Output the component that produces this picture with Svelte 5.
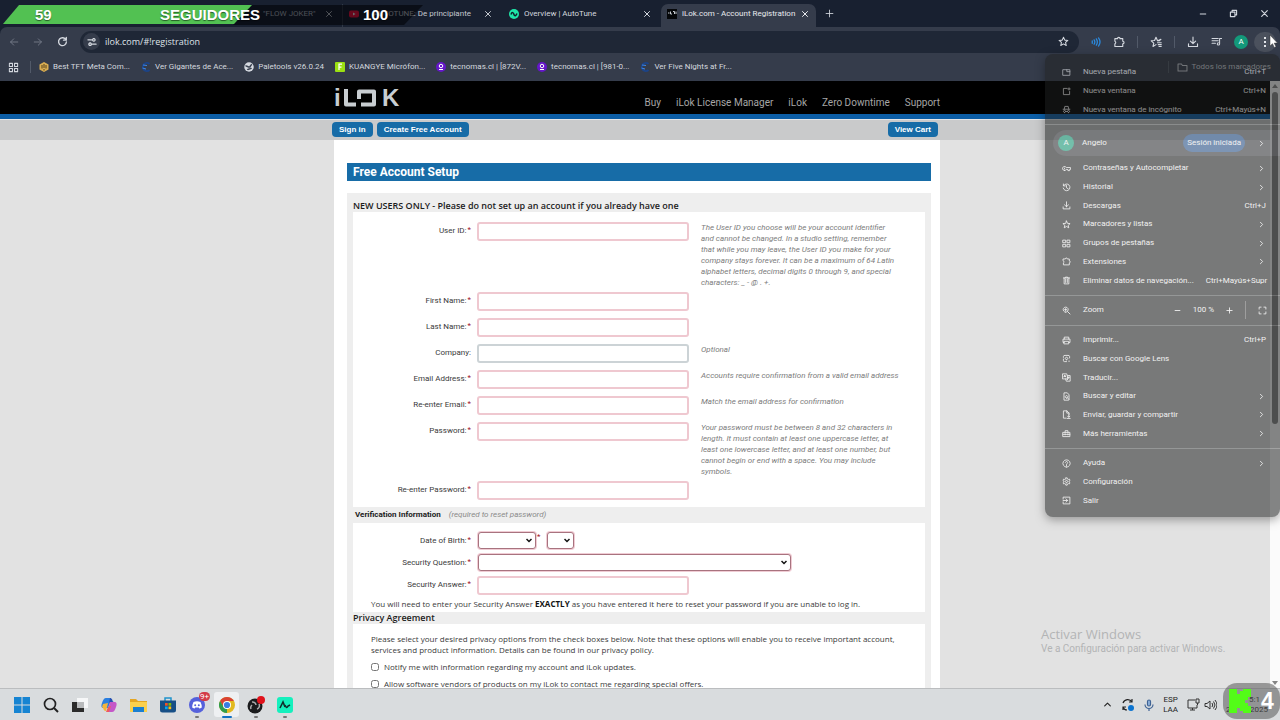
<script>
  const bookmarks = [
    { icon: 'hex', label: 'Best TFT Meta Com...' },
    { icon: 'arc', label: 'Ver Gigantes de Ace...' },
    { icon: 'globe', label: 'Paletools v26.0.24' },
    { icon: 'lime', label: 'KUANGYE Micrófon...' },
    { icon: 'purple', label: 'tecnomas.cl | [872V...' },
    { icon: 'purple', label: 'tecnomas.cl | [981-0...' },
    { icon: 'arc', label: 'Ver Five Nights at Fr...' }
  ];

  const nav = ['Buy', 'iLok License Manager', 'iLok', 'Zero Downtime', 'Support'];

  const fields = [
    {
      id: 'user', label: 'User ID:', req: true,
      help: 'The User ID you choose will be your account identifier and cannot be changed. In a studio setting, remember that while you may leave, the User ID you make for your company stays forever. It can be a maximum of 64 Latin alphabet letters, decimal digits 0 through 9, and special characters: _ - @ . +.'
    },
    { id: 'first', label: 'First Name:', req: true },
    { id: 'last', label: 'Last Name:', req: true },
    { id: 'company', label: 'Company:', req: false, help: 'Optional' },
    { id: 'email', label: 'Email Address:', req: true, help: 'Accounts require confirmation from a valid email address' },
    { id: 'email2', label: 'Re-enter Email:', req: true, help: 'Match the email address for confirmation' },
    {
      id: 'pass', label: 'Password:', req: true, type: 'password',
      help: 'Your password must be between 8 and 32 characters in length. It must contain at least one uppercase letter, at least one lowercase letter, and at least one number, but cannot begin or end with a space. You may include symbols.'
    },
    { id: 'pass2', label: 'Re-enter Password:', req: true, type: 'password' }
  ];

  const newItems = [
    { icon: 'tab', label: 'Nueva pestaña', key: 'Ctrl+T' },
    { icon: 'window', label: 'Nueva ventana', key: 'Ctrl+N' },
    { icon: 'incognito', label: 'Nueva ventana de incógnito', key: 'Ctrl+Mayús+N' }
  ];
  const dataItems = [
    { icon: 'key', label: 'Contraseñas y Autocompletar', more: true },
    { icon: 'history', label: 'Historial', more: true },
    { icon: 'download', label: 'Descargas', key: 'Ctrl+J' },
    { icon: 'star', label: 'Marcadores y listas', more: true },
    { icon: 'grid', label: 'Grupos de pestañas', more: true },
    { icon: 'puzzle', label: 'Extensiones', more: true },
    { icon: 'trash', label: 'Eliminar datos de navegación...', key: 'Ctrl+Mayús+Supr' }
  ];
  const toolItems = [
    { icon: 'print', label: 'Imprimir...', key: 'Ctrl+P' },
    { icon: 'lens', label: 'Buscar con Google Lens' },
    { icon: 'translate', label: 'Traducir...' },
    { icon: 'find', label: 'Buscar y editar', more: true },
    { icon: 'share', label: 'Enviar, guardar y compartir', more: true },
    { icon: 'toolbox', label: 'Más herramientas', more: true }
  ];
  const endItems = [
    { icon: 'help', label: 'Ayuda', more: true },
    { icon: 'gear', label: 'Configuración' },
    { icon: 'exit', label: 'Salir' }
  ];

  // Line icons on a 16 x 16 grid
  const paths = {
    tab: 'M2 3h12v10H2zM8.500 3v3.500H14',
    window: 'M9 2.500H2.500v11h11V8M12.500 1.500v4M10.500 3.500h4',
    incognito: 'M2 7.500h12M4 7.500l1-5h6l1 5M4.500 13.500a2 2 0 1 1 .1 0M11.500 13.500a2 2 0 1 1 .1 0M6.500 11.500h3',
    key: 'M4.500 11.500a3.500 3.500 0 1 1 3-5.200h7.500v3.500h-1.500v2h-3v-2h-3a3.500 3.500 0 0 1-3 1.700zM4.500 7.500v1',
    history: 'M3 4.500A6 6 0 1 1 2.200 9M2.500 1.800v3.400h3.400M8 4.500V8.500l3 1.800',
    download: 'M8 1.500v8.500M4.500 6.800L8 10.200l3.500-3.400M2 10.500V14h12v-3.500',
    star: 'M8 1.800l1.900 4.200 4.500.4-3.400 3 1 4.500L8 11.500l-4 2.400 1-4.500-3.400-3 4.500-.4z',
    starlist: 'M13 6.300L9.900 6 8 1.800 6.100 6l-4.500.4 3.400 3-1 4.500L8 11.500M10 9h5M11 11.500h4M12 14h3M10.500 6.500l4-2',
    grid: 'M2 2h4.500v4.500H2zM9.500 2H14v4.500H9.500zM2 9.500h4.500V14H2zM9.500 9.500H14V14H9.500z',
    puzzle: 'M2.500 3.500H6a1.700 1.700 0 0 1 3.400 0H13V7a1.700 1.700 0 0 1 0 3.400V14H2.500v-3.500a1.900 1.900 0 0 0 0-3.500z',
    trash: 'M2.500 3.500h11M6 3.500V2h4v1.500M3.800 3.500V14h8.400V3.500M6.500 6v5.500M9.500 6v5.500',
    print: 'M4 5.500V2h8v3.500M4 11.500H1.800v-6h12.400v6H12M4 9.500h8V14H4z',
    lens: 'M5.500 2.500h5M2.500 6V4.500a2 2 0 0 1 2-2M13.500 7V4.500a2 2 0 0 0-2-2M2.500 9v2.500a2 2 0 0 0 2 2H8M8 10.300a2.300 2.300 0 1 1 .1 0M12.500 13.500v-1.200',
    translate: 'M1.500 1.500h7l2 9h-9zM10 4.500h4.500v10h-7l-1-4M3.500 7l1.500-3.500L6.500 7M4 6h2M9.500 7.500h4M11.500 7.500c0 2-1 3.500-2 4.500',
    find: 'M12.500 13V5l-3-3.500h-6v13h8M8 11a2.300 2.300 0 1 1 .1 0M9.600 10.300l2.900 3.200',
    share: 'M7.500 14.500h-5v-13h6l4 4v3M8.500 1.500v4h4M12 8.500v4M10 11l2 2 2-2M9.500 15h5',
    toolbox: 'M2 6h12v7.500H2zM5.500 6V3h5v3M2 9.500h12M5.500 8.500v2M10.500 8.500v2',
    help: 'M8 14.500a6.500 6.500 0 1 1 .1 0M6 6.200a2 2 0 1 1 3 1.800c-.8.500-1 .9-1 1.700M8 11v1.200',
    gear: 'M6.800 1.500h2.400l.4 2 1.500.9 2-.7 1.100 2-1.500 1.500v1.700l1.500 1.400-1.100 2-2-.6-1.500.8-.4 2H6.800l-.4-2-1.500-.8-2 .6-1.100-2 1.500-1.400V7.200L1.800 5.700l1.100-2 2 .7 1.500-.9zM8 10.300a2.200 2.200 0 1 1 .1 0',
    exit: 'M2 5.500V2h12v12H2v-3.500M2 8h7.500M7 5l3 3-3 3',
    zoom: 'M6.500 11a4.500 4.500 0 1 1 .1 0M9.800 9.800l4.500 4.500M4.500 6.500h4M6.500 4.500v4',
    full: 'M2 5.500V2h3.500M10.500 2H14v3.500M14 10.500V14h-3.500M5.500 14H2v-3.500',
    chevron: 'M6 4l4 4-4 4',
    close: 'M3 3l10 10M13 3L3 13',
    plus: 'M8 2v12M2 8h12',
    minus: 'M2.500 8h11',
    back: 'M14 8H2.500M7.500 3L2.500 8l5 5',
    forward: 'M2 8h11.500M8.500 3l5 5-5 5',
    reload: 'M13 5.500A5.700 5.700 0 1 0 13.700 8.500M13.500 2v4h-4',
    tune: 'M1.500 4.500h6M11 2.500a2 2 0 1 1-.1 0M14.500 11.500h-6M5 9.500a2 2 0 1 1-.1 0',
    restore: 'M2.500 5.500h8v8h-8zM5.500 5V2.500h8v8H11',
    waves: 'M2 6v4M5 4.500c1.300 2 1.300 5 0 7M8.500 3c2 3 2 7 0 10M12 1.500c3 4 3 9 0 13',
    list: 'M1.500 3.500h9M1.500 7h9M1.500 10.500h5M12.500 11.500V3.500h3M12.500 11.500a1.700 1.700 0 1 1-1.700-1.700',
    folder: 'M1.500 13V3h5l1.500 2h6.500v8z',
    up: 'M3 10.500L8 5.500l5 5'
  };
</script>

{#snippet ic(name, size = 10, weight = 1.5)}
  <svg class="ic" width={size} height={size} viewBox="0 0 16 16" fill="none" stroke="currentColor" stroke-width={weight} stroke-linecap="round" stroke-linejoin="round" aria-hidden="true"><path d={paths[name]} /></svg>
{/snippet}

{#snippet fav(name)}
  <svg class="ic" width="10" height="10" viewBox="0 0 20 20" aria-hidden="true">
    {#if name === 'hex'}
      <path d="M10 0l9 5v10l-9 5-9-5V5z" fill="#d9ad52" /><path d="M10 4v8M10 14v3M6 6v7M14 6v7" stroke="#54401a" stroke-width="2" />
    {:else if name === 'arc'}
      <path d="M17 4A8 8 0 1 0 17 16" fill="none" stroke="#1c4488" stroke-width="4" /><path d="M4 6l8 1M3 12l7 2" stroke="#3c86e8" stroke-width="2" />
    {:else if name === 'globe'}
      <circle cx="10" cy="10" r="9.500" fill="#d5d9e0" /><path d="M3 8c4-1 5 3 8 2s1-4 5-5M7 16c1-3 5-1 8-4" fill="none" stroke="#394150" stroke-width="3" />
    {:else if name === 'lime'}
      <rect width="20" height="20" rx="2" fill="#9be012" /><path d="M8 16V4h6M8 10h5" fill="none" stroke="#fff" stroke-width="2.500" />
    {:else if name === 'purple'}
      <circle cx="10" cy="10" r="10" fill="#6516c9" /><circle cx="10" cy="8" r="3.500" fill="none" stroke="#fff" stroke-width="2" /><path d="M6 15h8" stroke="#fff" stroke-width="2" />
    {:else if name === 'tune'}
      <circle cx="10" cy="10" r="10" fill="#1ee6a8" /><path d="M4 11c2-6 5-4 6 0s4 3 6-2" fill="none" stroke="#10202a" stroke-width="3" />
    {:else if name === 'yt'}
      <rect y="3" width="20" height="14" rx="4" fill="#ff1040" /><path d="M8 7l5 3-5 3z" fill="#fff" />
    {:else}
      <rect width="20" height="20" fill="#05070a" /><path d="M2 8h3M7 5v5h3M12 5h3v5M18 5v5" stroke="#c9ced4" stroke-width="2" fill="none" />
    {/if}
  </svg>
{/snippet}

{#snippet rows(items)}
  <div class="group" style="flex-grow: {items.length}">
    {#each items as it}
      <button class="row" type="button">
        {@render ic(it.icon, 9)}
        <span class="name">{it.label}</span>
        {#if it.key}<span class="key">{it.key}</span>{/if}
        {#if it.more}{@render ic('chevron', 9)}{/if}
      </button>
    {/each}
  </div>
{/snippet}

{#snippet label(f)}
  <label for={f.id}>{f.label}{#if f.req}<sup>*</sup>{/if}</label>
{/snippet}

<div class="screen">
  <header class="tabs">
    <div class="tab first"><span class="title">"FLOW JOKER"</span><button aria-label="Cerrar">{@render ic('close', 8, 2)}</button></div>
    <div class="tab second">{@render fav('yt')}<span class="title">AUTOTUNE: De principiante</span><button aria-label="Cerrar">{@render ic('close', 8, 2)}</button></div>
    <div class="tab third">{@render fav('tune')}<span class="title">Overview | AutoTune</span><button aria-label="Cerrar">{@render ic('close', 8, 2)}</button></div>
    <div class="tab active">{@render fav('ilok')}<span class="title">iLok.com - Account Registration</span><button aria-label="Cerrar">{@render ic('close', 8, 2)}</button></div>
    <button class="plus" aria-label="Nueva pestaña">{@render ic('plus', 9)}</button>
    <div class="controls">
      <button aria-label="Minimizar">{@render ic('minus', 8, 2)}</button>
      <button aria-label="Restaurar">{@render ic('restore', 9, 2)}</button>
      <button aria-label="Cerrar">{@render ic('close', 9, 2)}</button>
    </div>
  </header>

  <div class="toolbar">
    <button class="off" aria-label="Atrás">{@render ic('back')}</button>
    <button class="off" aria-label="Adelante">{@render ic('forward')}</button>
    <button aria-label="Recargar">{@render ic('reload', 11, 2)}</button>
    <div class="omni">
      <span class="site">{@render ic('tune', 10, 2)}</span>
      <input aria-label="Dirección" value="ilok.com/#!registration" />
      <button aria-label="Favorito">{@render ic('star', 11)}</button>
    </div>
    <div class="actions">
      <button class="blue" aria-label="Audio">{@render ic('waves', 10, 2)}</button>
      <button aria-label="Extensiones">{@render ic('puzzle', 12)}</button>
      <i></i>
      <button aria-label="Marcadores">{@render ic('starlist', 12)}</button>
      <i></i>
      <button aria-label="Descargas">{@render ic('download', 12)}</button>
      <button aria-label="Multimedia">{@render ic('list', 11)}</button>
      <button class="avatar">A</button>
      <button class="dots" aria-label="Menú"><b></b><b></b><b></b></button>
    </div>
  </div>

  <nav class="bookmarks">
    {@render ic('grid', 11)}
    <i></i>
    {#each bookmarks as b}
      <a href="#top">{@render fav(b.icon)}<span>{b.label}</span></a>
    {/each}
    <i class="end"></i>
    <a class="all" href="#top">{@render ic('folder', 11)}<span>Todos los marcadores</span></a>
  </nav>

  <div class="view">
    <div class="page">
      <div class="black">
        <div class="wrap">
          <svg class="logo" width="68" height="20" viewBox="0 0 68 20" role="img" aria-label="iLok">
            <text x="0" y="18">i</text>
            <path d="M12 1v15.500h10M25 11V3.500h15v13H27" fill="none" stroke="#c8cdd1" stroke-width="4" stroke-linejoin="round" />
            <text x="48" y="18">K</text>
          </svg>
          <nav>{#each nav as n}<a href="#top">{n}</a>{/each}</nav>
        </div>
      </div>
      <div class="sub">
        <div class="wrap">
          <button>Sign in</button>
          <button>Create Free Account</button>
          <button class="cart">View Cart</button>
        </div>
      </div>
      <main>
        <h1>Free Account Setup</h1>
        <form>
          <h2>NEW USERS ONLY - Please do not set up an account if you already have one</h2>
          <section class="box account">
            {#each fields as f}
              <div class="field">
                {@render label(f)}
                <input id={f.id} type={f.type ?? 'text'} class:req={f.req} />
                {#if f.help}<p>{f.help}</p>{/if}
              </div>
            {/each}
          </section>
          <h3>Verification Information <em>(required to reset password)</em></h3>
          <section class="box verify">
            <div class="field">
              {@render label({ id: 'month', label: 'Date of Birth:', req: true })}
              <div class="dates">
                <select id="month" class="month"><option></option></select><sup>*</sup>
                <select class="day" aria-label="Day"><option></option></select>
              </div>
            </div>
            <div class="field">
              {@render label({ id: 'question', label: 'Security Question:', req: true })}
              <select id="question" class="question"><option></option></select>
            </div>
            <div class="field">
              {@render label({ id: 'answer', label: 'Security Answer:', req: true })}
              <input id="answer" type="text" class="req" />
            </div>
            <p class="note">You will need to enter your Security Answer <b>EXACTLY</b> as you have entered it here to reset your password if you are unable to log in.</p>
          </section>
          <h2 class="privacy">Privacy Agreement</h2>
          <section class="box terms">
            <p>Please select your desired privacy options from the check boxes below. Note that these options will enable you to receive important account, services and product information. Details can be found in our privacy policy.</p>
            <label><input type="checkbox" />Notify me with information regarding my account and iLok updates.</label>
            <label><input type="checkbox" />Allow software vendors of products on my iLok to contact me regarding special offers.</label>
          </section>
        </form>
      </main>
    </div>
    <div class="scroll"><span class="arrow top"></span><span class="thumb"></span><span class="arrow"></span></div>
  </div>

  <footer class="taskbar">
    <div class="apps">
      <button aria-label="Inicio"><svg width="16" height="16" viewBox="0 0 16 16"><path d="M0 0h7.500v7.500H0zM8.500 0H16v7.500H8.500zM0 8.500h7.500V16H0zM8.500 8.500H16V16H8.500z" fill="#1684d2" /></svg></button>
      <button aria-label="Buscar"><svg width="16" height="16" viewBox="0 0 16 16" fill="none" stroke="#222" stroke-width="1.700"><circle cx="7" cy="7" r="5.500" /><path d="M11 11l4 4" stroke-width="2" /></svg></button>
      <button aria-label="Vista de tareas"><svg width="16" height="16" viewBox="0 0 16 16"><path d="M5 1h11v10H5z" fill="#f6f7f8" /><path d="M0 5h5v6h7v4H0z" fill="#2b2b2b" /><path d="M5 5h7v6H5z" fill="#b8babc" /></svg></button>
      <button aria-label="Copilot"><svg width="16" height="16" viewBox="0 0 16 16"><path d="M5 1h5L7 11H3c-3 0-3-2-2-5s2-5 4-5z" fill="#2a7fe0" /><path d="M9 1c3 0 2 4 4 4h-4L7 11z" fill="#264fb0" /><path d="M2 7l5-1-2 8c-3 0-2-3-4-4z" fill="#f3b43a" /><path d="M9 5h4c3 0 3 2 2 5s-2 5-4 5H6z" fill="#c557c8" /><path d="M7 10l3-1-2 6H5z" fill="#ef5c5c" /></svg></button>
      <button aria-label="Explorador"><svg width="17" height="16" viewBox="0 0 17 16"><path d="M0 2h6l2 2h9v11H0z" fill="#e5a623" /><path d="M0 5h17v10H0z" fill="#fbd04d" /><path d="M3 10h11v5H3z" fill="#1b7fd0" /></svg></button>
      <button aria-label="Tienda"><svg width="16" height="16" viewBox="0 0 16 16"><path d="M5 4V1h6v3" fill="none" stroke="#1f93cc" stroke-width="1.500" /><path d="M0 3.500h16V13a2.500 2.500 0 0 1-2.500 2.500h-11A2.500 2.500 0 0 1 0 13z" fill="#174f86" /><path d="M5 6h2.700v2.700H5z" fill="#f35325" /><path d="M8.500 6h2.700v2.700H8.500z" fill="#81bc06" /><path d="M5 9.500h2.700v2.700H5z" fill="#05a6f0" /><path d="M8.500 9.500h2.700v2.700H8.500z" fill="#ffba08" /></svg></button>
      <button class="run" aria-label="Discord"><svg width="16" height="16" viewBox="0 0 16 16"><circle cx="8" cy="8" r="8" fill="#5561dc" /><path d="M4.500 5q3.500-1.500 7 0 1.500 3 1.300 5.500-1.500 1-2.500 1l-.6-1H6.300l-.6 1q-1 0-2.500-1Q3 8 4.500 5z" fill="#fff" /><circle cx="6.200" cy="8.300" r="1" fill="#5561dc" /><circle cx="9.800" cy="8.300" r="1" fill="#5561dc" /></svg><span class="count">9+</span></button>
      <button class="run now" aria-label="Chrome"><svg width="16" height="16" viewBox="0 0 16 16"><circle cx="8" cy="8" r="8" fill="#e2b91f" /><path d="M1.070 4A8 8 0 0 1 14.900 4H8L4.500 10z" fill="#d94234" /><path d="M1.070 4L4.600 10 8 12l0 4A8 8 0 0 1 1.070 4z" fill="#2f9c4e" /><circle cx="8" cy="8" r="4" fill="#fff" /><circle cx="8" cy="8" r="3.100" fill="#3a7de0" /></svg></button>
      <button class="run" aria-label="OBS"><svg width="18" height="18" viewBox="0 0 18 18"><circle cx="8" cy="10" r="7.500" fill="#1b1b1d" /><path d="M5 6a3.500 3.500 0 0 1 4 3M12 8a3.500 3.500 0 0 1-2 5M4 13a3.500 3.500 0 0 1 1-4" stroke="#aaa" stroke-width="1.500" fill="none" /><circle cx="14" cy="4" r="4" fill="#e0121b" /></svg></button>
      <button class="run" aria-label="AutoTune"><svg width="16" height="16" viewBox="0 0 16 16"><rect width="16" height="16" rx="3" fill="#14f0bd" /><path d="M3 11l3-6 2 5M8 8c1 3 2 3 3 1l2-1" stroke="#10302c" stroke-width="1.600" fill="none" /></svg></button>
    </div>
    <div class="tray">
      {@render ic('up', 9, 2)}
      <svg width="14" height="14" viewBox="0 0 14 14" fill="none" stroke="#222" stroke-width="1.200"><path d="M2 5a5 5 0 0 1 9-1M11 1v3H8M2 12V9h3M2 9q1 3 4 3" /><circle cx="10" cy="10" r="3" fill="#0b74d0" stroke="none" /></svg>
      <svg width="10" height="12" viewBox="0 0 10 12" fill="none" stroke="#3f6394" stroke-width="1.200"><rect x="3.500" y="1" width="3" height="6" rx="1.500" fill="#8fb2dc" /><path d="M1 5.500a4 4 0 0 0 8 0M5 9.500V12" /></svg>
      <span class="lang">ESP<br />LAA</span>
      <span class="devices">
        <svg width="13" height="13" viewBox="0 0 13 13" fill="none" stroke="#333"><path d="M8 2H1v8h9V7M3 12h5M5.500 10v2M9 1h3v4H9zM10.500 5v2" /></svg>
        <svg width="13" height="12" viewBox="0 0 13 12" fill="none" stroke="#333"><path d="M1 4.500h2L6 2v8L3 7.500H1zM8 4q1.500 2 0 4M9.500 2.500q3 3.500 0 7M11 1q4 5 0 10" /></svg>
      </span>
      <span class="clock"><span>5:1</span><span class="date"><span>2</span><span>2025</span></span></span>
    </div>
  </footer>

  <div class="activate"><strong>Activar Windows</strong><span>Ve a Configuración para activar Windows.</span></div>

  <div class="menu">
    {@render rows(newItems)}
    <hr />
    <button class="profile" type="button">
      <span class="face">A</span><span class="name">Angelo</span><span class="chip">Sesión iniciada</span>{@render ic('chevron', 9)}
    </button>
    {@render rows(dataItems)}
    <hr />
    <div class="zoomrow">
      {@render ic('zoom', 9)}<span class="name">Zoom</span>
      <button aria-label="Alejar">{@render ic('minus', 7, 2)}</button><span>100 %</span><button aria-label="Acercar">{@render ic('plus', 7, 2)}</button>
      <i></i>{@render ic('full', 9)}
    </div>
    <hr />
    {@render rows(toolItems)}
    <hr />
    {@render rows(endItems)}
  </div>

  <div class="goal">
    <svg width="424" height="20" viewBox="0 0 424 20" aria-hidden="true"><path d="M250 0h173l-19 20H233z" fill="#020406" fill-opacity="0.600" /><path d="M19 0h233l-18 19H3z" fill="#52c152" /></svg>
    <span class="g1">59</span><span class="g2">SEGUIDORES</span><span class="g3">100</span>
  </div>

  <div class="kick">
    <svg width="22" height="24" viewBox="0 0 22 24" aria-hidden="true"><path d="M0 0h8v5h3V2h3V0h8v8h-3v3h-3v3h3v3h3v7h-8v-2h-3v-3H8v5H0z" fill="#53fc18" /></svg>
    <span>4</span>
  </div>

  <svg class="cursor" width="9" height="13" viewBox="0 0 9 13" aria-hidden="true"><path d="M1 0v11l2.500-2.300L5.300 12.500l1.700-.8-1.800-3.600H8.500z" fill="#fff" stroke="#333" stroke-width="0.500" /></svg>
</div>

<style>
  :global(body) { margin: 0; }
  * { box-sizing: border-box; }
  button { font: inherit; color: inherit; background: none; border: 0; padding: 0; }
  button, .ic, svg { display: block; flex: none; }
  a { color: inherit; text-decoration: none; }
  h1, h2, h3, p { margin: 0; }

  .screen {
    position: relative;
    display: flex;
    flex-direction: column;
    height: 100vh;
    overflow: hidden;
    font: 8px/12px Roboto, "Noto Sans", sans-serif;
    color: #d4d8df;
    background: #182030;
  }

  .tabs { display: flex; align-items: stretch; height: 27px; padding-top: 4px; flex: none; }
  .tab { display: flex; align-items: center; gap: 5px; padding: 0 7px 4px 6px; }
  .tab .title { flex: 1; overflow: hidden; white-space: nowrap; }
  .tab.first { width: 342px; padding-left: 263px; padding-right: 9px; }
  .tab.first, .tab.second { color: #c4c8cf; }
  .tab.first .title { color: #b8bec8; }
  .tab.second { width: 159px; padding-right: 9px; border-left: 1px solid #303948; }
  .tab.second .title { text-align: right; padding-right: 8px; }
  .tab.third { width: 160px; padding-left: 8px; padding-right: 10px; }
  .tab.active { width: 155px; background: #353c4b; border-radius: 7px 7px 0 0; color: #e8eaee; }
  .plus { padding: 0 9px 4px; }
  .controls { display: flex; align-items: center; gap: 22px; margin-left: auto; padding: 0 11px 4px 0; }

  .toolbar { display: flex; align-items: center; gap: 14px; height: 28px; padding: 1px 4px 0 9px; flex: none; background: #353c4b; border-radius: 7px 7px 0 0; }
  .off { color: #737a87; }
  .omni { display: flex; flex: 1; align-items: center; gap: 5px; height: 22px; padding: 0 10px 0 3px; border-radius: 11px; background: #1f2736; margin-left: -2px; }
  .site { display: grid; place-items: center; width: 17px; height: 17px; border-radius: 50%; background: #353c4b; }
  .omni input { flex: 1; min-width: 0; border: 0; padding: 0; background: none; font: 9px/14px "Open Sans", sans-serif; color: #dfe3e9; outline: 0; }
  .actions { display: flex; align-items: center; gap: 12px; margin-left: -2px; }
  .actions i, .bookmarks i { width: 1px; height: 12px; background: #525a69; }
  .blue { color: #2b8be0; }
  .avatar { width: 14px; height: 14px; border-radius: 50%; background: #13997a; color: #fff; }
  .dots { display: grid; place-content: center; gap: 2px; width: 22px; height: 20px; margin-left: -6px; border-radius: 10px; background: #4b515d; }
  .dots b { width: 2px; height: 2px; background: #e4e6ea; }

  .bookmarks { display: flex; align-items: center; gap: 11px; height: 26px; padding: 0 9px 2px 8px; flex: none; background: #353c4b; }
  .bookmarks a { display: flex; align-items: center; gap: 4px; white-space: nowrap; }
  .bookmarks i { margin-right: -3px; }
  .bookmarks .end { margin-left: auto; }

  .view { position: relative; display: flex; flex: 1; min-height: 0; background: #e2e2e2; color: #3a3a3a; }
  .page { flex: 1; overflow: hidden; }
  .wrap, main { width: 606px; margin: 0 auto; position: relative; left: 2px; }
  .wrap { display: flex; }
  .black { height: 38px; background: #000; border-bottom: 5px solid #0c5ea6; }
  .black .wrap { justify-content: space-between; padding-top: 7px; }
  .black nav { display: flex; gap: 15px; font: 10px/30px Roboto, sans-serif; color: #a6a6a6; }
  .logo { overflow: visible; }
  .logo text { font: bold 24px "Liberation Sans", sans-serif; fill: #c8cdd1; }
  .sub { height: 21px; background: #c9cacb; border-top: 1px solid #e6e8ea; }
  .sub .wrap { left: 0; gap: 4px; padding-top: 2px; }
  .sub button { height: 15px; padding: 0 7px; border-radius: 4px; background: #176ca7; color: #fff; font: bold 8px/15px "Liberation Sans", sans-serif; }
  .sub .cart { margin-left: auto; }

  main { padding: 23px 9px 0 13px; background: #fff; }
  h1 { height: 18px; padding-left: 6px; background: #176ca7; color: #fff; font-size: 12px; line-height: 18px; }
  form { margin-top: 12px; padding: 7px 6px 0; background: #eee; }
  h2 { font: 600 9px/12px "Open Sans", sans-serif; color: #1c1c1c; }
  h3 { padding-left: 2px; font-size: 8px; line-height: 16px; color: #1c1c1c; }
  h3 em { margin-left: 6px; font-weight: normal; color: #8a8a8a; }
  .box { background: #fff; }
  .account { padding-top: 10px; }
  .field { display: grid; grid-template-columns: 118px 212px 204px; column-gap: 6px; align-items: start; }
  .account .field { min-height: 26px; }
  .field label { text-align: right; line-height: 18px; }
  sup { color: #a01028; font-size: 8px; line-height: 0; vertical-align: 1px; margin-left: 1px; }
  .field p { margin-left: 6px; padding-bottom: 4px; font-style: italic; line-height: 11px; color: #7c7c7c; }
  .field input { height: 19px; width: 100%; border: 2px solid #ccd3d6; border-radius: 3px; background: #fff; }
  .field .req { border-color: #efc8d0; }
  .verify { padding: 9px 0 2px; }
  .verify .field { height: 17px; margin-bottom: 5px; }
  .verify .field:nth-child(3) { height: 19px; margin-bottom: 3px; }
  select {
    height: 17px; border: 1px solid #a8737f; border-radius: 3px; box-shadow: 0 0 0 1px #f0ccd4; appearance: none;
    background: #fff url("data:image/svg+xml,%3Csvg xmlns='http://www.w3.org/2000/svg' width='6' height='5'%3E%3Cpath d='M0.5 1l2.500 2.500L5.500 1' fill='none' stroke='%23111' stroke-width='1.500'/%3E%3C/svg%3E") no-repeat right 3px center;
  }
  .dates { display: flex; }
  .dates sup { line-height: 10px; }
  .month { width: 58px; margin-left: 1px; }
  .day { width: 27px; margin-left: 7px; }
  .question { grid-column: 2 / 4; width: 313px; margin-left: 1px; }
  .note, .terms { font-family: "Open Sans", sans-serif; }
  .note { padding-left: 18px; line-height: 12px; }
  .note b { color: #111; }
  .terms { padding: 9px 16px 10px 18px; line-height: 11px; }
  .terms label { display: flex; align-items: center; gap: 5px; margin-top: 6px; }
  .terms input { width: 8px; height: 8px; margin: 0; }

  .scroll { display: flex; flex-direction: column; align-items: center; gap: 4px; width: 10px; padding: 3px 0; background: #fbfbfb; }
  .thumb { width: 6px; height: 332px; border-radius: 3px; background: #858585; margin-bottom: auto; }
  .arrow { border: 3px solid transparent; border-top: 4px solid #858585; border-bottom: 0; }
  .arrow.top { border-top: 0; border-bottom: 4px solid #858585; }

  .taskbar { display: flex; justify-content: space-between; height: 32px; flex: none; border-top: 1px solid #bbbdbf; background: #d9dcde; color: #222; }
  .apps { display: flex; align-items: center; justify-content: space-between; width: 298px; padding-left: 9px; }
  .apps button { position: relative; display: grid; place-items: center; width: 25px; height: 25px; border-radius: 3px; }
  .apps .now { background: #eef0f2; }
  .run::after { content: ""; position: absolute; bottom: -1px; width: 4px; height: 2px; border-radius: 1px; background: #777; }
  .now::after { width: 10px; background: #1070c4; }
  .count { position: absolute; top: 0; right: 0; padding: 0 1px; border-radius: 5px; background: #d33b48; color: #fff; line-height: 9px; }
  .tray { display: flex; align-items: center; gap: 9px; padding-right: 12px; }
  .lang { text-align: center; line-height: 10px; }
  .devices { display: flex; align-items: center; gap: 4px; }
  .clock { display: flex; flex-direction: column; align-items: flex-end; width: 42px; line-height: 10px; }
  .clock > span:first-child { padding-right: 8px; }
  .date { display: flex; justify-content: space-between; width: 100%; }

  .activate { position: absolute; left: 1041px; bottom: 64px; display: flex; flex-direction: column; color: #b3b4b5; font-size: 10px; line-height: 14px; }
  .activate strong { font: 13px/16px "Open Sans", sans-serif; }

  .menu {
    position: absolute; top: 54px; right: 0; width: 235px; height: 463px;
    display: flex; flex-direction: column; padding: 9px 0 7px;
    border-radius: 8px; background: #1f2121; color: #fff; opacity: 0.54; box-shadow: 0 3px 10px #0009;
  }
  .group { display: flex; flex-direction: column; flex-basis: 0; }
  .row { display: flex; flex: 1; align-items: center; gap: 12px; padding: 0 14px 0 17px; text-align: left; }
  .name { flex: 1; white-space: nowrap; }
  .key { white-space: nowrap; }
  hr { width: 100%; height: 1px; margin: 5px 0; border: 0; background: #565858; flex: none; }
  .profile { display: flex; align-items: center; gap: 8px; height: 26px; margin: 0 0 3px 8px; padding: 0 14px 0 5px; border-radius: 13px 0 0 13px; background: #35373b; text-align: left; }
  .face { width: 16px; border-radius: 50%; background: #19a37e; text-align: center; line-height: 16px; }
  .chip { margin-right: 4px; padding: 0 4px; border-radius: 9px; background: #285590; line-height: 18px; }
  .zoomrow { display: flex; align-items: center; gap: 12px; height: 19px; padding: 0 13px 0 17px; }
  .zoomrow i { width: 1px; height: 18px; background: #666; }

  .goal { position: absolute; top: 5px; left: 0; color: #fff; font: bold 15px/20px "Liberation Sans", sans-serif; text-shadow: 0 1px 1px #0008; }
  .goal span { position: absolute; top: 0; }
  .g1 { left: 35px; }
  .g2 { left: 160px; }
  .g3 { left: 363px; }

  .kick { position: absolute; right: 0; bottom: 1px; display: flex; align-items: center; gap: 10px; width: 57px; height: 36px; padding-left: 6px; border-radius: 14px; background: #5558; color: #fff; font: bold 23px/36px "Liberation Sans", sans-serif; }
  .cursor { position: absolute; top: 35px; left: 1269px; }
</style>
